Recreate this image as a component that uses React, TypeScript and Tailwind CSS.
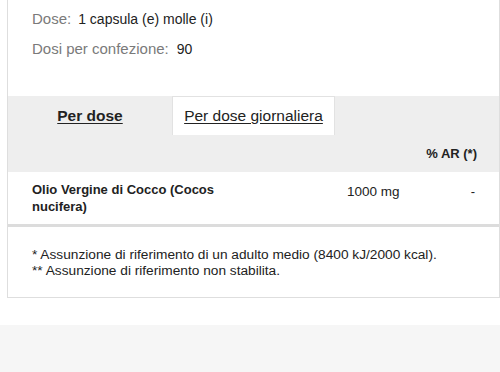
const App = () => {
  return (
    <div className="w-[500px] h-[372px] bg-white overflow-hidden font-['Liberation_Sans',Arial,sans-serif] text-[#222]">
      <div className="h-[325px] pl-[7px]">
        <div className="border-l border-r border-b border-[#dedede] h-[298px] flex flex-col">
          <div className="h-[96px] pl-6 pt-[11px] text-[14px]">
            <div className="flex items-baseline gap-[7px] leading-4">
              <span className="text-[#7a7a7a] text-[15px]">Dose:</span>
              <span>1 capsula (e) molle (i)</span>
            </div>
            <div className="flex items-baseline gap-[8px] leading-4 mt-[14px]">
              <span className="text-[#7a7a7a] text-[15px]">Dosi per confezione:</span>
              <span>90</span>
            </div>
          </div>

          <div className="flex h-[39px] bg-[#eeeeee] text-[15.5px]">
            <div className="w-[164px] flex items-center justify-center">
              <span className="font-bold underline underline-offset-2">Per dose</span>
            </div>
            <div className="w-[163px] bg-white border-l border-r border-t border-[#e2e2e2] flex items-center justify-center">
              <span className="underline underline-offset-2">Per dose giornaliera</span>
            </div>
          </div>

          <div className="h-[37px] bg-[#eeeeee] flex items-center justify-end pr-[22px] text-[13px] font-bold">
            % AR (*)
          </div>

          <div className="h-[55px] flex items-start pt-[9px] pl-6 pr-[24px] text-[13px] border-b-[3px] border-[#dcdcdc]">
            <div className="w-[300px] font-bold leading-[17px]">
              Olio Vergine di Cocco (Cocos
              <br />
              nucifera)
            </div>
            <div className="w-[100px] pt-[1px] pl-[15px] text-[13.5px]">1000 mg</div>
            <div className="flex-1 text-right pt-[1px]">-</div>
          </div>

          <div className="pl-6 pt-[20px] text-[13.7px] leading-4">
            <p>* Assunzione di riferimento di un adulto medio (8400 kJ/2000 kcal).</p>
            <p>** Assunzione di riferimento non stabilita.</p>
          </div>
        </div>
      </div>
      <div className="h-[47px] bg-[#f6f6f6]" />
    </div>
  )
}

export default App;
